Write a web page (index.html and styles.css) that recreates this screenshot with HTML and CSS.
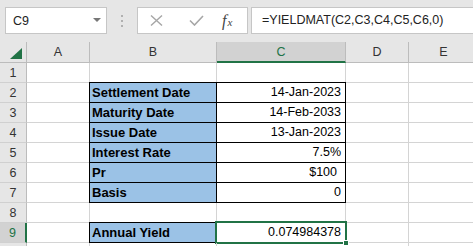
FILE: index.html
```html
<!DOCTYPE html>
<html lang="en">
<head>
    <meta charset="UTF-8">
    <meta name="viewport" content="width=device-width, initial-scale=1.0">
    <title>YIELDMAT</title>
    <link rel="stylesheet" href="styles.css">
</head>
<body>
    <div class="formula-bar">
        <div class="name-box">
            <span>C9</span>
            <span class="drop"></span>
        </div>
        <div class="grip"><i></i><i></i><i></i></div>
        <div class="fx-box">
            <span class="icon-btn">
                <svg width="13" height="11" viewBox="0 0 13 11"><path d="M1 0.5 L12 10.5 M12 0.5 L1 10.5" stroke="#a6a6a6" stroke-width="1.4" fill="none"/></svg>
            </span>
            <span class="icon-btn">
                <svg width="15" height="11" viewBox="0 0 15 11"><path d="M1 5.5 L5.5 10 L14 1" stroke="#a6a6a6" stroke-width="1.6" fill="none"/></svg>
            </span>
            <span class="fx">f<sub>x</sub></span>
        </div>
        <div class="formula">=YIELDMAT(C2,C3,C4,C5,C6,0)</div>
    </div>

    <div class="sheet">
        <div class="hd corner"><span class="tri"></span></div>
        <div class="hd col">A</div>
        <div class="hd col">B</div>
        <div class="hd col sel">C</div>
        <div class="hd col">D</div>
        <div class="hd col">E</div>

        <div class="hd row">1</div>
        <div class="cell"></div><div class="cell"></div><div class="cell"></div><div class="cell"></div><div class="cell"></div>

        <div class="hd row">2</div>
        <div class="cell"></div>
        <div class="cell label top">Settlement Date</div>
        <div class="cell val top">14-Jan-2023</div>
        <div class="cell"></div><div class="cell"></div>

        <div class="hd row">3</div>
        <div class="cell"></div>
        <div class="cell label">Maturity Date</div>
        <div class="cell val">14-Feb-2033</div>
        <div class="cell"></div><div class="cell"></div>

        <div class="hd row">4</div>
        <div class="cell"></div>
        <div class="cell label">Issue Date</div>
        <div class="cell val">13-Jan-2023</div>
        <div class="cell"></div><div class="cell"></div>

        <div class="hd row">5</div>
        <div class="cell"></div>
        <div class="cell label">Interest Rate</div>
        <div class="cell val">7.5%</div>
        <div class="cell"></div><div class="cell"></div>

        <div class="hd row">6</div>
        <div class="cell"></div>
        <div class="cell label">Pr</div>
        <div class="cell val currency">$100</div>
        <div class="cell"></div><div class="cell"></div>

        <div class="hd row">7</div>
        <div class="cell"></div>
        <div class="cell label">Basis</div>
        <div class="cell val">0</div>
        <div class="cell"></div><div class="cell"></div>

        <div class="hd row">8</div>
        <div class="cell"></div><div class="cell"></div><div class="cell"></div><div class="cell"></div><div class="cell"></div>

        <div class="hd row sel">9</div>
        <div class="cell"></div>
        <div class="cell label top">Annual Yield</div>
        <div class="cell val top active">0.074984378<span class="handle"></span></div>
        <div class="cell"></div><div class="cell"></div>

        <div class="hd row"></div>
        <div class="cell"></div><div class="cell"></div><div class="cell"></div><div class="cell"></div><div class="cell"></div>
    </div>
</body>
</html>
```

FILE: styles.css
```css
* {
    box-sizing: border-box;
}
body {
    margin: 0;
    background: #fff;
    font-family: "Liberation Sans", Arial, sans-serif;
    color: #000;
    overflow: hidden;
}

/* formula bar */
.formula-bar {
    display: flex;
    align-items: flex-start;
    height: 42px;
    padding: 7px 0 0 5px;
    background: #e6e6e6;
}
.name-box {
    width: 102px;
    height: 27px;
    background: #fff;
    border: 1px solid #c6c6c6;
    display: flex;
    align-items: center;
    justify-content: space-between;
    padding: 0 5px 0 7px;
    font-size: 12.5px;
    color: #222;
}
.drop {
    width: 0;
    height: 0;
    border-left: 4px solid transparent;
    border-right: 4px solid transparent;
    border-top: 4px solid #777;
    margin-bottom: 2px;
}
.grip {
    width: 30px;
    height: 27px;
    display: flex;
    flex-direction: column;
    align-items: center;
    justify-content: center;
    gap: 3px;
}
.grip i {
    width: 2px;
    height: 2px;
    background: #b0b0b0;
}
.fx-box {
    width: 111px;
    height: 27px;
    background: #fff;
    border: 1px solid #c6c6c6;
    display: flex;
    align-items: center;
    padding-left: 12px;
}
.icon-btn {
    display: flex;
    width: 39px;
}
.fx {
    font-family: "Liberation Serif", "Times New Roman", serif;
    font-style: italic;
    font-size: 16px;
    color: #444;
    margin-left: -6px;
}
.fx sub {
    font-size: 11px;
    vertical-align: 0;
    margin-left: 1px;
}
.formula {
    flex: 1;
    height: 27px;
    margin-left: 3px;
    background: #fff;
    border: 1px solid #c6c6c6;
    border-right: none;
    padding-left: 10px;
    font-size: 12.5px;
    line-height: 25px;
    color: #222;
}

/* sheet grid */
.sheet {
    display: grid;
    grid-template-columns: 27px 63px 127px 129px 63px 70px;
    grid-template-rows: 21px repeat(10, 20px);
}
.hd {
    background: #e6e6e6;
    color: #333;
    font-size: 12.5px;
    display: flex;
    align-items: center;
    justify-content: center;
    border-right: 1px solid #bcbcbc;
    border-bottom: 1px solid #bcbcbc;
}
.hd.row {
    border-bottom-color: #d0d0d0;
}
.hd.sel {
    background: #d2d2d2;
    color: #217346;
}
.hd.col.sel {
    border-bottom: 2px solid #217346;
}
.hd.row.sel {
    border-right: 2px solid #217346;
}
.corner {
    position: relative;
}
.tri {
    position: absolute;
    right: 4px;
    bottom: 3px;
    width: 0;
    height: 0;
    border-left: 12px solid transparent;
    border-bottom: 11px solid #217346;
}
.cell {
    position: relative;
    border-right: 1px solid #d4d4d4;
    border-bottom: 1px solid #d4d4d4;
    font-size: 12.5px;
    line-height: 19px;
    padding: 0 4px 0 3px;
    white-space: nowrap;
}
.label {
    background: #9bc2e6;
    font-weight: bold;
    font-size: 13px;
    padding-left: 2px;
    border-right-color: #000;
    border-bottom-color: #000;
    box-shadow: -1px 0 0 #000;
}
.label.top {
    box-shadow: -1px 0 0 #000, 0 -1px 0 #000, -1px -1px 0 #000;
}
.val {
    text-align: right;
    border-right-color: #000;
    border-bottom-color: #000;
}
.val.top {
    box-shadow: 0 -1px 0 #000;
}
.currency {
    padding-right: 8px;
}
.active::after {
    content: "";
    position: absolute;
    left: -2px;
    top: -2px;
    right: -2px;
    bottom: -2px;
    border: 2px solid #217346;
}
.handle {
    position: absolute;
    right: -4px;
    bottom: -4px;
    width: 6px;
    height: 6px;
    background: #217346;
    border: 1px solid #fff;
    z-index: 2;
}
```
